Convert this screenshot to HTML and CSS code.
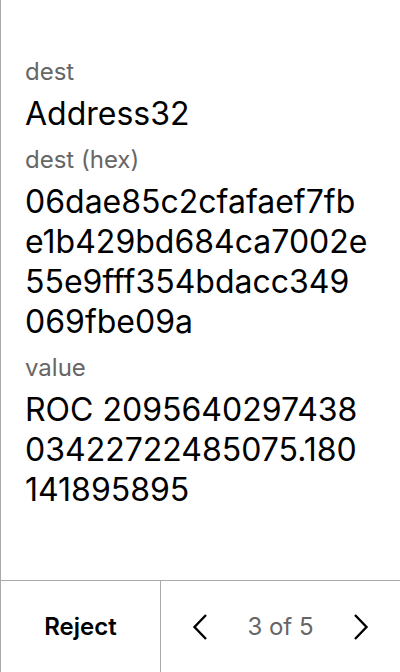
FILE: index.html
```html
<!DOCTYPE html>
<html>
<head>
<meta charset="utf-8">
<link rel="stylesheet" href="styles.css">
</head>
<body>
<div class="screen">
  <main class="content">
    <div class="field">
      <div class="label">dest</div>
      <div class="value">Address32</div>
    </div>
    <div class="field">
      <div class="label">dest (hex)</div>
      <div class="value">06dae85c2cfafaef7fb<br>e1b429bd684ca7002e<br>55e9fff354bdacc349<br>069fbe09a</div>
    </div>
    <div class="field">
      <div class="label">value</div>
      <div class="value">ROC 2095640297438<br>03422722485075.180<br>141895895</div>
    </div>
  </main>
  <footer class="footer">
    <button class="reject">Reject</button>
    <div class="pager">
      <svg class="chev" width="16" height="28" viewBox="0 0 16 28"><path d="M14 2 L2.5 14 L14 26" fill="none" stroke="#000" stroke-width="2.4"/></svg>
      <span class="count">3 of 5</span>
      <svg class="chev" width="16" height="28" viewBox="0 0 16 28"><path d="M2 2 L13.5 14 L2 26" fill="none" stroke="#000" stroke-width="2.4"/></svg>
    </div>
  </footer>
</div>
</body>
</html>
```
FILE: styles.css
```css
* { box-sizing: border-box; }
html, body { margin: 0; padding: 0; background: #fff; }
body { font-family: Inter, "Liberation Sans", sans-serif; color: #000; }
.screen {
  width: 400px;
  height: 672px;
  display: flex;
  flex-direction: column;
  border-left: 1px solid #aaaaaa;
}
.content {
  flex: 1;
  padding: 58px 20px 0 24px;
  display: flex;
  flex-direction: column;
  gap: 12px;
}
.field {
  display: flex;
  flex-direction: column;
  gap: 8px;
}
.label {
  font-size: 24px;
  line-height: 28px;
  color: #666;
}
.value {
  font-size: 32px;
  line-height: 40px;
  word-break: break-all;
}
.footer {
  height: 92px;
  border-top: 1px solid #aaaaaa;
  display: flex;
}
.reject {
  width: 160px;
  border: none;
  border-right: 1px solid #aaaaaa;
  background: #fff;
  font-family: Inter, "Liberation Sans", sans-serif;
  font-size: 24px;
  font-weight: 600;
  color: #000;
  padding: 0;
}
.pager {
  flex: 1;
  display: flex;
  align-items: center;
  justify-content: space-between;
  padding: 0 31px;
}
.count {
  font-size: 24px;
  color: #666;
}
.chev { display: block; }
```
